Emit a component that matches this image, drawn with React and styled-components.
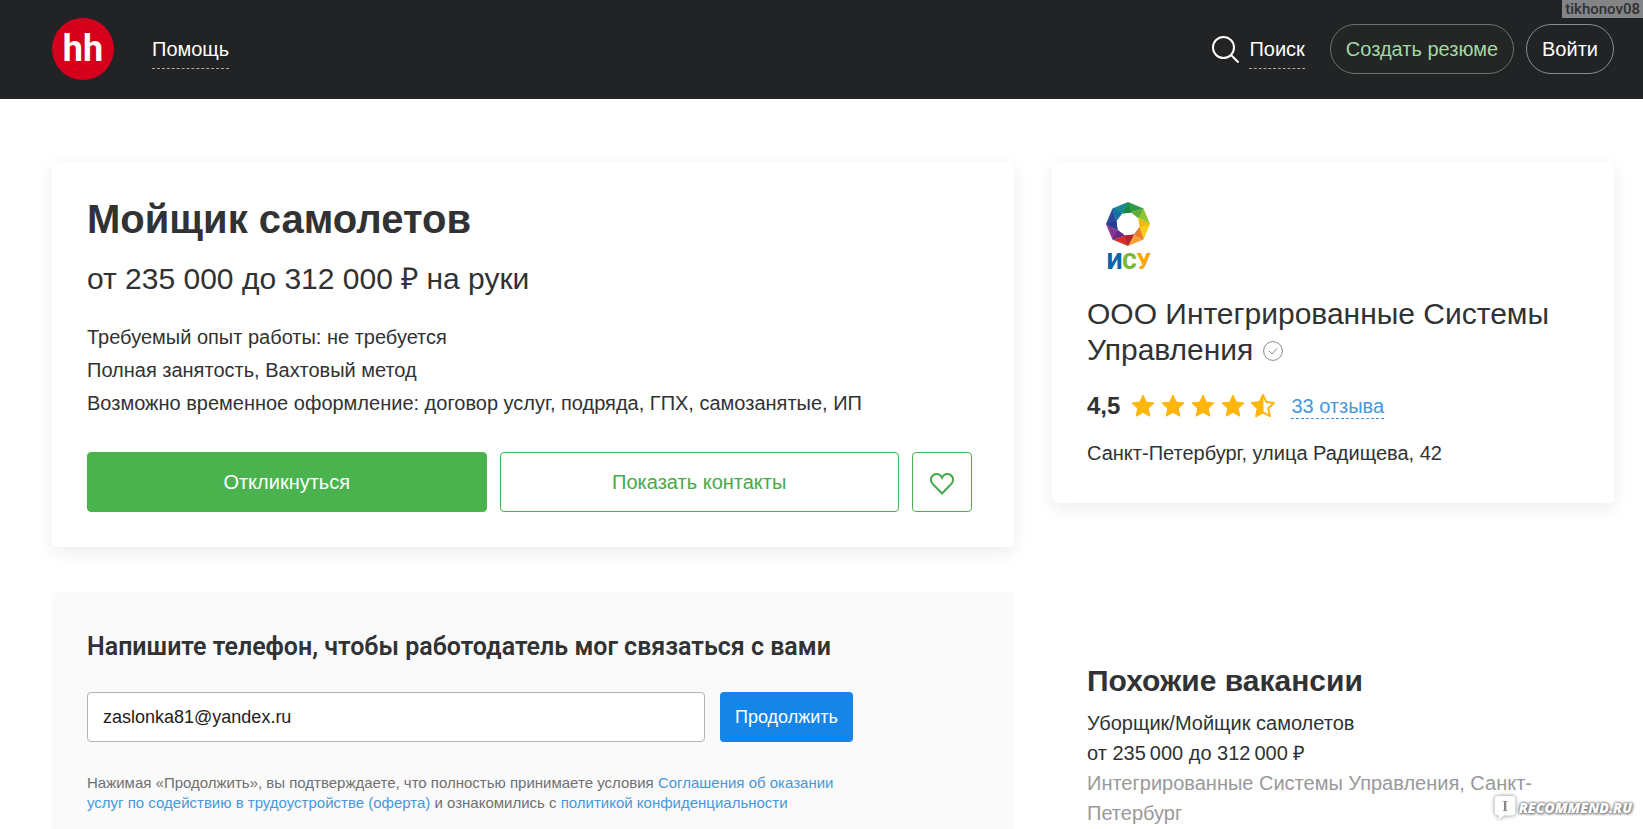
import React, {useState} from "react";
import styled, {createGlobalStyle} from "styled-components";

const GlobalStyle = createGlobalStyle`
  * {
    box-sizing: border-box;
  }
  body {
    margin: 0;
    background: #fff;
    color: #303233;
    font-family: "Liberation Sans", Arial, sans-serif;
    font-size: 20px;
    line-height: 30px;
  }
  h1, h2, p {
    margin: 0;
  }
  button, input {
    font-family: inherit;
  }
  a {
    text-decoration: none;
  }
`

const Page = styled.div`
  position: relative;
  display: flex;
  flex-direction: column;
  min-height: 100vh;
`

const Header = styled.header`
  display: flex;
  align-items: center;
  height: 99px;
  padding: 0 29px 1px 52px;
  background: #222325;
`

const Logo = styled.a`
  display: flex;
  align-items: center;
  justify-content: center;
  width: 62px;
  height: 62px;
  margin-right: 38px;
  border-radius: 50%;
  background: #d6001c;
  color: #fff;
  font: bold 36px Roboto, sans-serif;
`

const HeaderLink = styled.a`
  padding: 5px 0 4px;
  border-bottom: 1px dashed #aaa;
  color: #fff;
`

const HeaderActions = styled.div`
  display: flex;
  align-items: center;
  margin-left: auto;
`

const SearchIcon = styled.svg`
  width: 27px;
  height: 27px;
  margin-right: 10px;
`

const PillButton = styled.button`
  height: 50px;
  margin-left: ${props => props.$gap};
  padding: 0 15px;
  border: 1px solid ${props => props.$border};
  border-radius: 25px;
  background: ${props => props.$background || "transparent"};
  color: ${props => props.$color};
  font-size: 20px;
`

const Content = styled.main`
  flex: 1;
  display: grid;
  grid-template-columns: 481fr 281fr;
  column-gap: 38px;
  padding: 63px 29px 0 52px;
`

const Column = styled.div`
  display: flex;
  flex-direction: column;
`

const Card = styled.section`
  padding: ${props => props.$padding};
  border-radius: 5px;
  background: #fff;
  box-shadow: 0 5px 18px rgba(0, 0, 0, .08);
`

const VacancyTitle = styled.h1`
  font-size: 40px;
  line-height: 44px;
`

const Salary = styled.p`
  margin: 20px 0 24px;
  font-size: 30px;
  line-height: 36px;
`

const Condition = styled.p`
  line-height: 33px;
`

const Actions = styled.div`
  display: flex;
  gap: 13px;
  margin-top: 32px;
`

const ActionButton = styled.button`
  flex: 1;
  height: 60px;
  border: 1px solid #4bb34e;
  border-radius: 4px;
  background: ${props => props.$primary ? "#4bb34e" : "#fff"};
  color: ${props => props.$primary ? "#fff" : "#46aa4a"};
  font-size: 20px;
`

const LikeButton = styled(ActionButton)`
  flex: 0 0 60px;
  display: flex;
  align-items: center;
  justify-content: center;
  padding: 4px 0 0;
`

const PhoneForm = styled.form`
  flex: 1;
  margin-top: 45px;
  padding: 35px 35px 10px;
  border-radius: 5px 5px 0 0;
  background: #fafafa;
`

const FormTitle = styled.label`
  display: block;
  font: 600 25px/40px Roboto, sans-serif;
`

const FormRow = styled.div`
  display: flex;
  gap: 15px;
  margin: 25px 0 31px;
`

const TextInput = styled.input`
  flex: 0 1 618px;
  min-width: 0;
  height: 50px;
  padding: 0 15px;
  border: 1px solid #b3b3b3;
  border-radius: 4px;
  background: #fff;
  color: #222;
  font-size: 18px;
`

const SubmitButton = styled.button`
  height: 50px;
  padding: 0 15px;
  border: 0;
  border-radius: 4px;
  background: #1784e8;
  color: #fff;
  font-size: 18px;
`

const Agreement = styled.p`
  max-width: 750px;
  color: #707070;
  font-size: 15px;
  line-height: 20px;
`

const TextLink = styled.a`
  color: #4698dc;
`

const CompanyLogo = styled.svg`
  display: block;
  width: 100px;
  height: 90px;
  font: 900 22px Roboto, sans-serif;
`

const CompanyName = styled.h2`
  margin-top: 12px;
  font-size: 30px;
  font-weight: normal;
  line-height: 36px;
`

const VerifiedIcon = styled.svg`
  width: 20px;
  height: 20px;
  margin-left: 1px;
  vertical-align: -1px;
`

const Rating = styled.div`
  display: flex;
  align-items: center;
  margin: 23px 0 17px;
`

const RatingValue = styled.span`
  margin-right: 11px;
  font-size: 24px;
  font-weight: bold;
`

const Stars = styled.div`
  display: flex;
  gap: 6px;
  margin-right: 16px;
`

const ReviewsLink = styled(TextLink)`
  border-bottom: 1px dashed #4698dc;
  line-height: 24px;
`

const Similar = styled.section`
  padding: 160px 29px 0 35px;
`

const SimilarTitle = styled.h2`
  margin-bottom: 9px;
  font-size: 30px;
  line-height: 36px;
`

const VacancyLink = styled.a`
  display: block;
  color: #303233;
`

const Employer = styled.p`
  color: #999;
`

const UserMark = styled.div`
  position: absolute;
  top: 0;
  right: 0;
  padding: 0 3px;
  background: #838485;
  color: #2f3032;
  font: 500 15px/18px Roboto, sans-serif;
`

const SiteMark = styled.div`
  position: absolute;
  right: 11px;
  bottom: 8px;
  display: flex;
  align-items: center;
  gap: 2px;
  color: #fff;
  font: italic 800 14px/26px "Open Sans", sans-serif;
  text-shadow: 0 0 3px #777, 0 0 3px #777, 1px 1px 3px #888;
`

const Bubble = styled.svg`
  width: 24px;
  height: 26px;
  overflow: visible;
  filter: drop-shadow(0 0 2px #888);
  font: bold 16px "Liberation Serif", serif;
  text-shadow: none;
`

const STAR = "M12 1l3.3 7.1 7.7.9-5.7 5.3 1.5 7.9L12 18.4l-6.8 3.8 1.5-7.9L1 9l7.7-.9z"

// blades of the octagonal shutter, clockwise from the top: face and shaded inner side
const BLADES = [
    ["#2f9a45", "#1c873f"],
    ["#8fc63a", "#5fae35"],
    ["#f6cf14", "#f0b90f"],
    ["#f6a03a", "#e67e2b"],
    ["#d3302b", "#b3232b"],
    ["#8a3496", "#632b88"],
    ["#2a4a9c", "#243f8e"],
    ["#16869a", "#1771a0"],
]

const corner = (i, radius, turn = 0) => {
    const angle = (i * 45 - 90 + turn) * Math.PI / 180
    return `${41 + radius * Math.cos(angle)},${30 + radius * Math.sin(angle)}`
}

const outer = i => corner(i, 22)
const inner = i => corner(i, 12, -30)

const Star = ({half}) => (
    <svg width="24" height="24" viewBox="0 0 24 24" fill="#ffb60a" stroke="#ffb60a" strokeLinejoin="round">
        {half ? (
            <>
                <path d={STAR} fill="none" strokeWidth="2"/>
                <path d="M12 1v17.4l-6.8 3.8 1.5-7.9L1 9l7.7-.9z"/>
            </>
        ) : <path d={STAR}/>}
    </svg>
)

const App = () => {
    const [contact, setContact] = useState("zaslonka81@yandex.ru");

    return (
        <Page>
            <GlobalStyle/>
            <Header>
                <Logo href="#">hh</Logo>
                <HeaderLink href="#">Помощь</HeaderLink>
                <HeaderActions>
                    <SearchIcon viewBox="0 0 27 27" fill="none" stroke="#fff" strokeWidth="2">
                        <circle cx="11.500" cy="11.500" r="10.500"/>
                        <path d="M19 19l7.500 7.500"/>
                    </SearchIcon>
                    <HeaderLink href="#">Поиск</HeaderLink>
                    <PillButton $gap="25px" $border="#66766a" $background="#242525" $color="#a1d9a5">
                        Создать резюме
                    </PillButton>
                    <PillButton $gap="12px" $border="#8c8d8e" $color="#fff">Войти</PillButton>
                </HeaderActions>
            </Header>

            <Content>
                <Column>
                    <Card $padding="35px 42px 35px 35px">
                        <VacancyTitle>Мойщик самолетов</VacancyTitle>
                        <Salary>от 235 000 до 312 000 ₽ на руки</Salary>
                        <Condition>Требуемый опыт работы: не требуется</Condition>
                        <Condition>Полная занятость, Вахтовый метод</Condition>
                        <Condition>Возможно временное оформление: договор услуг, подряда, ГПХ, самозанятые, ИП</Condition>
                        <Actions>
                            <ActionButton $primary>Откликнуться</ActionButton>
                            <ActionButton>Показать контакты</ActionButton>
                            <LikeButton aria-label="В избранное">
                                <svg width="24" height="22" viewBox="0 0 24 22" fill="none" stroke="#46aa4a" strokeWidth="2">
                                    <path d="M12 20.500L3 11.300C-1.500 6.200 2.200 1 6.500 1c2.600 0 4.300 1.300 5.500 3.800C13.200 2.300 14.900 1 17.500 1c4.300 0 8 5.200 3.500 10.300z"/>
                                </svg>
                            </LikeButton>
                        </Actions>
                    </Card>

                    <PhoneForm onSubmit={e => e.preventDefault()}>
                        <FormTitle htmlFor="contact">Напишите телефон, чтобы работодатель мог связаться с вами</FormTitle>
                        <FormRow>
                            <TextInput id="contact" value={contact} onChange={e => setContact(e.target.value)}/>
                            <SubmitButton>Продолжить</SubmitButton>
                        </FormRow>
                        <Agreement>
                            Нажимая «Продолжить», вы подтверждаете, что полностью принимаете условия{" "}
                            <TextLink href="#">Соглашения об оказании услуг по содействию в трудоустройстве (оферта)</TextLink>
                            {" "}и ознакомились с <TextLink href="#">политикой конфиденциальности</TextLink>
                        </Agreement>
                    </PhoneForm>
                </Column>

                <Column>
                    <Card $padding="32px 29px 35px 35px">
                        <CompanyLogo viewBox="0 0 100 90">
                            {BLADES.map(([face, shade], i) => (
                                <g key={face}>
                                    <polygon fill={face} points={[outer(i), outer(i + 1), inner(i + 1), inner(i)].join(" ")}/>
                                    <polygon fill={shade} points={[outer(i), inner(i + 1), inner(i)].join(" ")}/>
                                </g>
                            ))}
                            <text x="20" y="75">
                                <tspan fill="#0865ad">И</tspan>
                                <tspan fill="#78b833">С</tspan>
                                <tspan fill="#f5a800">У</tspan>
                            </text>
                        </CompanyLogo>
                        <CompanyName>
                            ООО Интегрированные Системы Управления{" "}
                            <VerifiedIcon viewBox="0 0 20 20" fill="none" stroke="#888">
                                <circle cx="10" cy="10" r="9.400"/>
                                <path d="M6 10l3 3 5-5.500"/>
                            </VerifiedIcon>
                        </CompanyName>
                        <Rating>
                            <RatingValue>4,5</RatingValue>
                            <Stars>
                                <Star/>
                                <Star/>
                                <Star/>
                                <Star/>
                                <Star half/>
                            </Stars>
                            <ReviewsLink href="#">33 отзыва</ReviewsLink>
                        </Rating>
                        <p>Санкт-Петербург, улица Радищева, 42</p>
                    </Card>

                    <Similar>
                        <SimilarTitle>Похожие вакансии</SimilarTitle>
                        <VacancyLink href="#">Уборщик/Мойщик самолетов</VacancyLink>
                        <p>от 235{"\u2009"}000 до 312{"\u2009"}000 ₽</p>
                        <Employer>Интегрированные Системы Управления, Санкт-Петербург</Employer>
                    </Similar>
                </Column>
            </Content>

            <UserMark>tikhonov08</UserMark>
            <SiteMark>
                <Bubble viewBox="0 0 24 28">
                    <path fill="#fff" d="M5 1h14q4 0 4 4v13q0 4-4 4h-8l-6 5v-5q-4 0-4-4V5q0-4 4-4z"/>
                    <text x="9" y="17" fill="#888">I</text>
                </Bubble>
                RECOMMEND.RU
            </SiteMark>
        </Page>
    );
}

export default App;
